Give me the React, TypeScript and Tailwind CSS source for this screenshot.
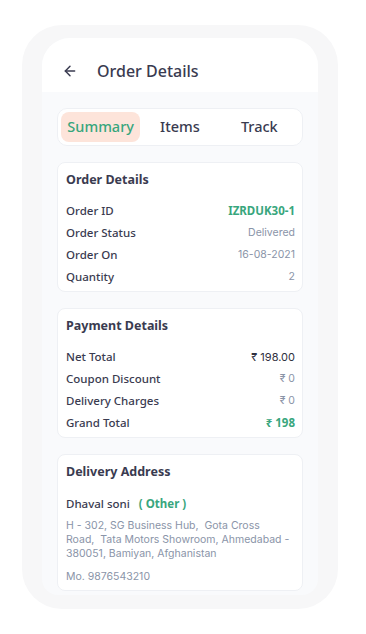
import React from "react";

const label = "text-[11.5px] leading-[22px] font-medium text-[#3a3b50]";
const value = "text-[10.5px] leading-[22px] text-[#8a94a8]";
const labelFont = { fontFamily: '"Noto Sans", sans-serif' };

function Row({ l, v, vClass }: { l: string; v: string; vClass?: string }) {
  return (
    <div className="flex items-center justify-between">
      <span className={label} style={labelFont}>{l}</span>
      <span className={vClass ?? value} style={{ fontFamily: vClass ? '"Noto Sans", sans-serif' : 'Inter, sans-serif' }}>{v}</span>
    </div>
  );
}

function Card({ title, children, className }: { title: string; children: React.ReactNode; className?: string }) {
  return (
    <div className={"bg-white border border-[#eef0f4] rounded-[8px] pt-[9px] pl-[8px] pr-[7px] " + (className ?? "")}>
      <div className="text-[12.5px] leading-[16px] font-bold text-[#3a3b50]" style={labelFont}>{title}</div>
      {children}
    </div>
  );
}

export default function App() {
  return (
    <div className="w-[366px] h-[634px] bg-white pt-[25px] pl-[22px]">
      <div className="w-[316px] h-[584px] bg-[#f7f7f8] rounded-[40px] pt-[13px] px-[20px]">
        <div className="w-[276px] h-[557px] bg-[#f9fafc] rounded-t-[28px] rounded-b-[16px] overflow-hidden">
          <div className="h-[54px] bg-white flex items-center pt-[12px] pl-[20px]">
            <svg width="16" height="16" viewBox="0 0 24 24" fill="none" stroke="#3a3b50" strokeWidth="2.2" strokeLinecap="round" strokeLinejoin="round">
              <path d="M19 12H5" />
              <path d="M12 19l-7-7 7-7" />
            </svg>
            <span className="ml-[19px] text-[16px] font-medium text-[#3a3b50]" style={labelFont}>Order Details</span>
          </div>
          <div className="px-[15px] pt-[16px]">
            <div className="h-[38px] bg-white border border-[#eef0f4] rounded-[10px] p-[3px] grid grid-cols-3">
              <div className="bg-[#fde4da] rounded-[8px] flex items-center justify-center text-[14.5px] font-medium text-[#38a67d]" style={labelFont}>Summary</div>
              <div className="flex items-center justify-center text-[14.5px] font-medium text-[#3a3b50]" style={labelFont}>Items</div>
              <div className="flex items-center justify-center text-[14.5px] font-medium text-[#3a3b50]" style={labelFont}>Track</div>
            </div>

            <Card title="Order Details" className="mt-[16px] h-[130px]">
              <div className="mt-[12px]">
                <Row l="Order ID" v="IZRDUK30-1" vClass="text-[11.5px] leading-[22px] font-bold text-[#38a67d]" />
                <Row l="Order Status" v="Delivered" />
                <Row l="Order On" v="16-08-2021" />
                <Row l="Quantity" v="2" />
              </div>
            </Card>

            <Card title="Payment Details" className="mt-[16px] h-[130px]">
              <div className="mt-[12px]">
                <div className="flex items-center justify-between">
                  <span className={label} style={labelFont}>Net Total</span>
                  <span className="text-[11px] leading-[22px] text-[#2f3040]" style={{ fontFamily: 'Inter, sans-serif' }}>₹ 198.00</span>
                </div>
                <Row l="Coupon Discount" v="₹ 0" />
                <Row l="Delivery Charges" v="₹ 0" />
                <Row l="Grand Total" v="₹ 198" vClass="text-[11.5px] leading-[22px] font-bold text-[#38a67d]" />
              </div>
            </Card>

            <Card title="Delivery Address" className="mt-[16px] h-[137px]">
              <div className="mt-[13px] flex items-center leading-[22px]">
                <span className="text-[11.5px] font-medium text-[#3a3b50]" style={labelFont}>Dhaval soni</span>
                <span className="ml-[6px] text-[11.5px] font-bold text-[#38a67d] whitespace-pre" style={labelFont}>{" ( Other )"}</span>
              </div>
              <div className="mt-[4px] text-[10.5px] leading-[14px] text-[#8a94a8] whitespace-pre" style={{ fontFamily: 'Inter, sans-serif' }}>
                <div>H - 302, SG Business Hub,  Gota Cross</div>
                <div>Road,  Tata Motors Showroom, Ahmedabad -</div>
                <div>380051, Bamiyan, Afghanistan</div>
              </div>
              <div className="mt-[8px] text-[10.5px] leading-[16px] text-[#8a94a8]" style={{ fontFamily: 'Inter, sans-serif' }}>Mo. 9876543210</div>
            </Card>
          </div>
        </div>
      </div>
    </div>
  );
}
